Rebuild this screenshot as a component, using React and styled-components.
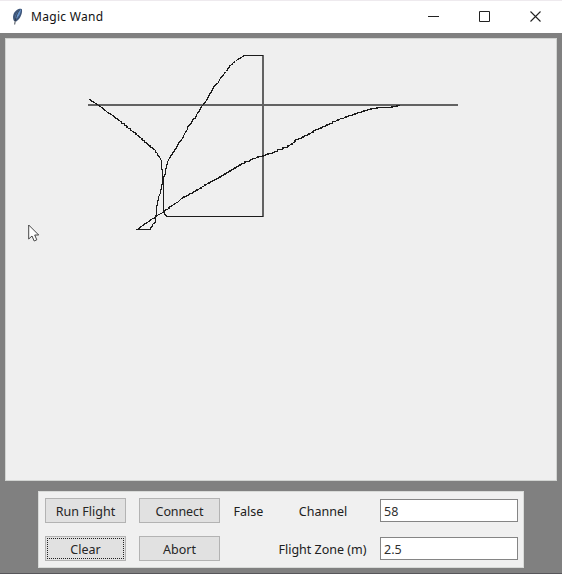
import React from "react";
import styled, { createGlobalStyle } from "styled-components";

const GlobalStyle = createGlobalStyle`
  *, *::before, *::after { box-sizing: border-box; }
  body { margin: 0; overflow: hidden; background: #808080; }
`;

const Window = styled.main`
  position: relative;
  display: flex;
  flex-direction: column;
  width: 562px;
  height: 574px;
  background: #808080;
  border-bottom: 1px solid #57565a;
  font-family: "Noto Sans", "Open Sans", sans-serif;
  color: #202020;
`;

const TitleBar = styled.header`
  display: flex;
  align-items: center;
  height: 33px;
  flex: none;
  background: #fff;
  border-top: 1px solid #eeeaee;
  padding: 0 1px 1px 10px;
`;

const Title = styled.h1`
  flex: 1;
  margin: 0 0 0 6px;
  font-size: 12px;
  font-weight: 400;
  line-height: 18px;
  letter-spacing: 0.3px;
  color: #111;
`;

const Controls = styled.div`
  display: flex;
  height: 100%;
`;

const ControlButton = styled.button`
  display: flex;
  align-items: center;
  justify-content: center;
  width: 51px;
  padding: 0;
  border: 0;
  background: none;
`;

const CanvasFrame = styled.section`
  flex: none;
  width: 552px;
  height: 443px;
  margin: 5px 0 0 5px;
  background: #efefef;
  border: 1px solid #d2d4d2;
  svg { display: block; margin: -1px; }
`;

const Panel = styled.section`
  display: grid;
  grid-template-columns: 81px 13px 81px 57px 103px 138px;
  grid-template-rows: 25px 25px;
  row-gap: 13px;
  align-items: center;
  width: 486px;
  height: 77px;
  margin: 10px 0 0 38px;
  padding: 6px 5px 6px 6px;
  background: #f0f0f0;
  border: 1px solid #d8dad8;
`;

const PushButton = styled.button`
  grid-column: ${(p) => p.$column};
  height: 25px;
  padding: 2px 0 0;
  font: 400 12.5px/20px "Noto Sans", "Open Sans", sans-serif;
  letter-spacing: ${(p) => p.$spacing || 0}px;
  color: #252525;
  background: #e1e1e1;
  border: 1px solid #b3b3b3;
  outline: ${(p) => (p.$focused ? "1px dotted #222" : "none")};
  outline-offset: -3px;
`;

const Label = styled.span`
  grid-column: ${(p) => p.$column};
  justify-self: center;
  padding: 2px ${(p) => p.$inset || 0}px 0 0;
  white-space: nowrap;
  font-size: 12.5px;
  line-height: 20px;
`;

const Entry = styled.input`
  grid-column: 6;
  width: 138px;
  height: 23px;
  padding: 1px 3px 0;
  border: 1px solid #858585;
  border-radius: 0;
  outline: none;
  background: #fff;
  color: #303030;
  font: 400 12.5px/20px "Noto Sans", "Open Sans", sans-serif;
`;

const Feather = () => (
  <svg width="15" height="20" viewBox="0 0 15 20">
    <path d="M4 14C1.8 10 3.5 5.5 6.5 3.2C9 1.3 11.8 1.4 12 2.5C12.5 6.3 10.5 11.5 6.3 14.5Z" fill="#3d5579" />
    <path d="M5 11C5.5 7 7.5 4.5 11 2.3C10.8 6.5 8.3 10.6 5.8 12Z" fill="#6b96cc" />
    <path d="M9.5 3.5C7 6 5.7 9.5 4.7 17.5" fill="none" stroke="#2d3440" strokeWidth=".9" />
  </svg>
);

const Drawing = () => (
  <svg width="552" height="443" viewBox="5 38 552 443" fill="none" stroke="#1b1b1b" strokeWidth="1.15" shapeRendering="crispEdges">
    <path d="M88 105H458M263 55V217" stroke="#626262" strokeWidth="2" />
    <path d="M263 216.5H167L164.5 214L163.5 211V183L162.5 180V170L161.5 169V161L159.5 157L157.5 155V153.5L155.5 152V150.5L152.5 148L150 147V145.5L147.5 144.5V143.5L144.5 142V141L142 140V138.5L139 137V136L136 134.5V133.5L133 131.5L130.5 130V129L127 127.5V126L124.5 125.5V124L121.5 123V121.5L118.5 120.5V119.5L115 118V117L110.5 114L107 112L103.5 109L99 105.5L95 103L92.5 101.5L89.5 99.5" />
    <path d="M263 55.5H244L241.5 57.5L239.5 58.5L237 60L235.5 61.5L233.5 62.5L232 64.5L230 65.5L229 67.5L227.5 69L226.5 71.5L224.5 73L223.5 75L221.5 77L219.5 79.5L218.5 82.5L215.5 85L213.5 87L212.5 90L210.5 93L208.5 96L207.5 99L204.5 103L202.5 105.5L200.5 108L199.5 111L196.5 114.5L195.5 118L192.5 119.5V121L190.5 124L187.5 127V129L184.5 134L182.5 138.5L180.5 141L178.5 143L177.5 146L173.5 152L169.5 158L167.5 162L166.5 167L165.5 170V174L163.5 177V181L161.5 186L160.5 193L158.5 197L157.5 204L156.5 207V214L155.5 217V222L152.5 224.5V226L150.5 228V229.5H136" />
    <path d="M138.5 229.5L139.5 227.5L142 226L144 224.5L147 222.5L150 221V220L154.5 218L157 215.5L162 213L165.5 210L169 208.5V207.5L173 205L175 203.5L178 202L181.5 198.5L184 197.5V196.5L188.5 195.5V194.5L193.5 192.5V191.5L197 190.5V189.5L201 188.5V187.5L205 185.5V184.5L209 183.5V182.5L214 180.5L217 178.5L220 177.5V176.5L225 174.5V173.5L230 171.5V170.5L235 168.5V167.5L240 165.5V164.5L245 163V162L250 161V160L254 158.5L258 157.5V156.5L263 156.5V155.5L268 154.5V153.5L272.5 153V152.5L277.5 151.5V150L283 149V148L288 147V145.5L292 144.5V143.5L295 142V140L303 137.5V136.5L309 134.5V133.5L313 132.5V131.5L316 129.5L321 128.5V127.5L327 125.5V124.5L332.5 123.5V122L338 120.5V119.5L346 117.5V116.5L355 114.5V113.5L364 111.5V110.5L371 109.5V108.5L377 108.5V107.5L392 107.5V106.5L397 106.5V105.5H400" />
  </svg>
);

const Cursor = styled.svg`
  position: absolute;
  left: 28px;
  top: 224px;
`;

export default function App() {
  return (
    <>
      <GlobalStyle />
      <Window>
        <TitleBar>
          <Feather />
          <Title>Magic Wand</Title>
          <Controls>
            <ControlButton aria-label="Minimize">
              <svg width="11" height="11"><path d="M0 5.5H11" stroke="#222" /></svg>
            </ControlButton>
            <ControlButton aria-label="Maximize">
              <svg width="11" height="11"><path d="M.5 .5H10.5V10.5H.5Z" fill="none" stroke="#222" /></svg>
            </ControlButton>
            <ControlButton aria-label="Close">
              <svg width="11" height="11"><path d="M.5 .5L10.5 10.5M10.5 .5L.5 10.5" stroke="#222" strokeWidth="1.1" /></svg>
            </ControlButton>
          </Controls>
        </TitleBar>
        <CanvasFrame><Drawing /></CanvasFrame>
        <Panel>
          <PushButton $column={1}>Run Flight</PushButton>
          <PushButton $column={3} $spacing={-0.1}>Connect</PushButton>
          <Label $column={4}>False</Label>
          <Label $column={5} $inset={11}>Channel</Label>
          <Entry aria-label="Channel" defaultValue="58" />
          <PushButton $column={1} $focused>Clear</PushButton>
          <PushButton $column={3}>Abort</PushButton>
          <Label $column={5} $inset={12}>Flight Zone (m)</Label>
          <Entry aria-label="Flight Zone (m)" defaultValue="2.5" />
        </Panel>
        <Cursor width="12" height="19" viewBox="0 0 12 19">
          <path d="M.7 1V15L4 12L6.2 17L8.8 15.8L6.7 11H10.7Z" fill="#fff" stroke="#333" strokeWidth=".9" />
        </Cursor>
      </Window>
    </>
  );
}
